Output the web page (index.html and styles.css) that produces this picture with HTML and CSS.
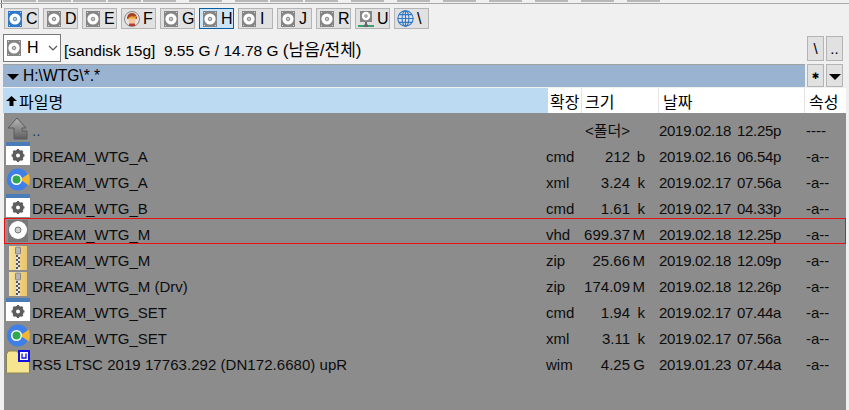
FILE: index.html
```html
<!DOCTYPE html>
<html>
<head>
    <meta charset="UTF-8">
    <title>파일 목록</title>
    <link rel="stylesheet" href="styles.css">
</head>
<body>
    <svg class="defs" width="0" height="0">
        <symbol id="drive" viewBox="0 0 14 16">
            <rect x="0" y="0" width="14" height="16" fill="#858585"/>
            <circle cx="7" cy="8" r="5.6" fill="#fff"/>
            <circle cx="7" cy="8" r="1.8" fill="#c4c4c4" stroke="#777" stroke-width=".8"/>
            <path d="M1 1h1v1H1zM12 1h1v1h-1zM1 14h1v1H1zM12 14h1v1h-1z" fill="#ddd"/>
        </symbol>
        <symbol id="drive-blue" viewBox="0 0 14 16">
            <rect x="0" y="0" width="14" height="16" fill="#2f78c8"/>
            <circle cx="7" cy="8" r="5.6" fill="#fff"/>
            <circle cx="7" cy="8" r="1.8" fill="#bcd" stroke="#47a" stroke-width=".8"/>
            <path d="M1 1h1v1H1zM12 1h1v1h-1zM1 14h1v1H1zM12 14h1v1h-1z" fill="#cde"/>
        </symbol>
        <symbol id="gear-doc" viewBox="0 0 24 24">
            <rect x="0" y="0" width="24" height="23" fill="#fff"/>
            <rect x="0" y="0" width="24" height="4" fill="#4a7cb8"/>
            <circle cx="12" cy="13.500" r="4.200" fill="none" stroke="#5c5c5c" stroke-width="3"/>
            <path d="M12 7v13M5.500 13.500h13M7.400 8.900l9.200 9.200M16.600 8.900l-9.200 9.200" stroke="#5c5c5c" stroke-width="2.200"/>
            <circle cx="12" cy="13.500" r="2" fill="#fff"/>
        </symbol>
        <symbol id="xml" viewBox="0 0 24 24">
            <circle cx="12" cy="11.500" r="11" fill="#3f7fe8"/>
            <path d="M14 11.500L23 5.500q1.500 6 0 12z" fill="#f2b632"/>
            <circle cx="10.500" cy="11.500" r="5.500" fill="#fff"/>
            <circle cx="10.500" cy="11.500" r="4" fill="#2fa84f"/>
        </symbol>
        <symbol id="zip" viewBox="0 0 24 24">
            <defs>
                <linearGradient id="zipfill" x1="0" x2="1" y1="0" y2="0">
                    <stop offset="0" stop-color="#f6e09a"/>
                    <stop offset="1" stop-color="#e9c46c"/>
                </linearGradient>
            </defs>
            <path d="M3 0h18v24H3z" fill="url(#zipfill)"/>
            <rect x="10" y="0" width="4" height="24" fill="#e8e8e8"/>
            <path d="M10 9h2v2h-2zM12 11h2v2h-2zM10 13h2v2h-2zM12 15h2v2h-2zM10 17h2v2h-2zM12 19h2v2h-2zM10 21h2v2h-2z" fill="#555"/>
            <rect x="9.500" y="1" width="5" height="7" rx="1" fill="#b4b4b4" stroke="#777" stroke-width=".8"/>
        </symbol>
        <linearGradient id="upfill" x1="0" x2="0" y1="0" y2="1">
            <stop offset="0" stop-color="#b8b8b8"/>
            <stop offset="1" stop-color="#5e5e5e"/>
        </linearGradient>
    </svg>

    <div class="topstrip">
        <div class="tb"></div><div class="tb"></div><div class="tb"></div><div class="tb"></div><div class="tb"></div>
        <div class="tb sep"></div><div class="tb sep"></div><div class="tb"></div><div class="tb"></div>
        <div class="tb sep"></div><div class="tb sep"></div><div class="tb sep"></div><div class="tb sep"></div>
        <div class="tb sep"></div><div class="tb sep"></div><div class="tb sep"></div>
    </div>

    <div class="drives">
        <div class="drive"><svg class="drive-icon"><use href="#drive-blue"/></svg>C</div>
        <div class="drive"><svg class="drive-icon"><use href="#drive"/></svg>D</div>
        <div class="drive"><svg class="drive-icon"><use href="#drive"/></svg>E</div>
        <div class="drive">
            <svg class="drive-icon wide" viewBox="0 0 16 16">
                <circle cx="8" cy="8" r="7.500" fill="#e4e4e4" stroke="#888"/>
                <path d="M3 8c0-4 2-6 5-6s5 2 5 6z" fill="#a8431f"/>
                <circle cx="8" cy="9" r="3.600" fill="#f4c69a"/>
                <path d="M3.500 7l9-2-1 2.500h-7z" fill="#e8a020"/>
                <path d="M5 12.500h6V15H5z" fill="#c03a2a"/>
            </svg>F
        </div>
        <div class="drive"><svg class="drive-icon"><use href="#drive"/></svg>G</div>
        <div class="drive current"><svg class="drive-icon"><use href="#drive"/></svg>H</div>
        <div class="drive"><svg class="drive-icon"><use href="#drive"/></svg>I</div>
        <div class="drive"><svg class="drive-icon"><use href="#drive"/></svg>J</div>
        <div class="drive"><svg class="drive-icon"><use href="#drive"/></svg>R</div>
        <div class="drive">
            <svg class="drive-icon wide" viewBox="0 0 16 16">
                <rect x="2" y="0" width="12" height="11" fill="#858585"/>
                <circle cx="8" cy="5" r="4.200" fill="#fff"/>
                <circle cx="8" cy="5" r="1.400" fill="#c4c4c4" stroke="#777" stroke-width=".6"/>
                <path d="M8 11v3" stroke="#666" stroke-width="2"/>
                <path d="M0 15h6M10 15h6" stroke="#3aa36a" stroke-width="2"/>
                <rect x="6" y="13.500" width="4" height="2.500" fill="#666"/>
            </svg>U
        </div>
        <div class="drive">
            <svg class="drive-icon globe" viewBox="0 0 20 20" fill="none" stroke="#2f78c8" stroke-width="1.300">
                <circle cx="10" cy="10" r="9"/>
                <ellipse cx="10" cy="10" rx="4" ry="9"/>
                <path d="M10 1v18M1 10h18M2.500 5.500h15M2.500 14.500h15"/>
            </svg>\
        </div>
    </div>

    <div class="inforow">
        <div class="combo">
            <svg class="drive-icon"><use href="#drive"/></svg>
            <span class="combo-letter">H</span>
            <svg class="combo-arrow" viewBox="0 0 10 6"><path d="M1 1l4 4 4-4" fill="none" stroke="#555" stroke-width="1.200"/></svg>
        </div>
        <div class="info">[sandisk 15g]&nbsp; 9.55 G / 14.78 G <span class="kr">(남음/전체)</span></div>
        <div class="smallbtn tall">\</div>
        <div class="smallbtn tall">..</div>
    </div>

    <div class="pathrow">
        <div class="path"><span class="tri"></span>H:\WTG\*.*</div>
        <div class="smallbtn star">✱</div>
        <div class="smallbtn"><span class="tri"></span></div>
    </div>

    <div class="heads">
        <div class="head head-name"><span class="up"></span>파일명</div>
        <div class="head head-ext">확장</div>
        <div class="head head-size">크기</div>
        <div class="head head-date">날짜</div>
        <div class="head head-attr">속성</div>
    </div>

    <div class="list">
        <div class="row">
            <svg class="icon" viewBox="0 0 24 24"><path d="M11 2L20 12h-4v3h5v8H8V12H2z" fill="url(#upfill)" stroke="#5a5a5a"/></svg>
            <div class="dots">..</div><div></div>
            <div class="num">&lt;폴더&gt;</div><div></div>
            <div class="stamp">2019.02.18</div><div class="stamp">12.25p</div><div>----</div>
        </div>
        <div class="row">
            <svg class="icon"><use href="#gear-doc"/></svg>
            <div>DREAM_WTG_A</div><div>cmd</div>
            <div class="num">212</div><div class="unit">b</div>
            <div class="stamp">2019.02.16</div><div class="stamp">06.54p</div><div>-a--</div>
        </div>
        <div class="row">
            <svg class="icon"><use href="#xml"/></svg>
            <div>DREAM_WTG_A</div><div>xml</div>
            <div class="num">3.24</div><div class="unit">k</div>
            <div class="stamp">2019.02.17</div><div class="stamp">07.56a</div><div>-a--</div>
        </div>
        <div class="row">
            <svg class="icon"><use href="#gear-doc"/></svg>
            <div>DREAM_WTG_B</div><div>cmd</div>
            <div class="num">1.61</div><div class="unit">k</div>
            <div class="stamp">2019.02.17</div><div class="stamp">04.33p</div><div>-a--</div>
        </div>
        <div class="row selected">
            <svg class="icon" viewBox="0 0 24 24">
                <rect x="2" y="0" width="20" height="22" fill="#777"/>
                <circle cx="12" cy="10" r="9" fill="#fff"/>
                <circle cx="12" cy="10" r="3" fill="#ccc" stroke="#777"/>
            </svg>
            <div>DREAM_WTG_M</div><div>vhd</div>
            <div class="num">699.37</div><div class="unit">M</div>
            <div class="stamp">2019.02.18</div><div class="stamp">12.25p</div><div>-a--</div>
        </div>
        <div class="row">
            <svg class="icon"><use href="#zip"/></svg>
            <div>DREAM_WTG_M</div><div>zip</div>
            <div class="num">25.66</div><div class="unit">M</div>
            <div class="stamp">2019.02.18</div><div class="stamp">12.09p</div><div>-a--</div>
        </div>
        <div class="row">
            <svg class="icon"><use href="#zip"/></svg>
            <div>DREAM_WTG_M (Drv)</div><div>zip</div>
            <div class="num">174.09</div><div class="unit">M</div>
            <div class="stamp">2019.02.18</div><div class="stamp">12.26p</div><div>-a--</div>
        </div>
        <div class="row">
            <svg class="icon"><use href="#gear-doc"/></svg>
            <div>DREAM_WTG_SET</div><div>cmd</div>
            <div class="num">1.94</div><div class="unit">k</div>
            <div class="stamp">2019.02.17</div><div class="stamp">07.44a</div><div>-a--</div>
        </div>
        <div class="row">
            <svg class="icon"><use href="#xml"/></svg>
            <div>DREAM_WTG_SET</div><div>xml</div>
            <div class="num">3.11</div><div class="unit">k</div>
            <div class="stamp">2019.02.17</div><div class="stamp">07.56a</div><div>-a--</div>
        </div>
        <div class="row">
            <svg class="icon" viewBox="0 0 24 24">
                <path d="M.5 4l2-3h8l3 3h10v19H.5z" fill="#f6e58f" stroke="#8c8450"/>
                <rect x="13" y="1" width="10" height="10" fill="#fff" stroke="#1010e0" stroke-width="2"/>
                <path d="M16 3.500v4.500h4V3.500" fill="none" stroke="#1010e0" stroke-width="1.300"/>
            </svg>
            <div class="long">RS5 LTSC 2019 17763.292 (DN172.6680) upR</div><div>wim</div>
            <div class="num">4.25</div><div class="unit">G</div>
            <div class="stamp">2019.01.23</div><div class="stamp">07.44a</div><div>-a--</div>
        </div>
    </div>
</body>
</html>
```

FILE: styles.css
```css
html, body {
    height: 100%;
    overflow: hidden;
}
body {
    margin: 0;
    background: linear-gradient(#2a7fd0, #2a7fd0) 1px 0 / 1px 8px no-repeat #f0f0f0;
    color: #000;
    font-family: "Liberation Sans", "Noto Sans CJK KR", sans-serif;
    font-size: 15px;
    display: flex;
    flex-direction: column;
}
.defs {
    position: absolute;
}
.topstrip {
    height: 3px;
    flex: none;
    display: flex;
    gap: 2px;
    padding-left: 3px;
    border-bottom: 1px solid #a8a8a8;
}
.tb {
    width: 33px;
    height: 2px;
    background-color: #b8b8b8;
}
.tb.sep {
    margin-left: 11px;
}
.drives {
    display: flex;
    gap: 4px;
    padding: 4px 0 0 4px;
    height: 21px;
    flex: none;
}
.drive {
    width: 35px;
    height: 21px;
    box-sizing: border-box;
    border: 1px solid #b4b4b4;
    background-color: #e1e1e1;
    display: flex;
    align-items: center;
    gap: 4px;
    padding-left: 3px;
    font-size: 16px;
}
.drive.current {
    border-color: #0a5d9e;
    background-color: #cce4f7;
}
.drive-icon {
    width: 14px;
    height: 16px;
    flex: none;
}
.drive-icon.wide {
    width: 16px;
    height: 16px;
    margin-left: -1px;
    margin-right: -1px;
}
.drive-icon.globe {
    width: 17px;
    height: 17px;
    margin-left: -1px;
    margin-right: -1px;
}
.inforow {
    display: flex;
    align-items: center;
    height: 28px;
    margin-top: 5px;
    padding: 0 6px 0 3px;
    gap: 2px;
    flex: none;
}
.combo {
    width: 58px;
    height: 28px;
    box-sizing: border-box;
    border: 1px solid #7a7a7a;
    background-color: #fff;
    display: flex;
    align-items: center;
    padding-left: 3px;
    font-size: 16px;
}
.combo-letter {
    margin-left: 6px;
}
.combo-arrow {
    width: 10px;
    height: 6px;
    margin-left: 9px;
}
.info {
    flex: 1;
    margin-left: 1px;
    font-size: 15.500px;
}
.kr {
    font-size: 17px;
}
.smallbtn {
    width: 17px;
    height: 23px;
    box-sizing: border-box;
    border: 1px solid #b4b4b4;
    background-color: #e1e1e1;
    display: flex;
    align-items: center;
    justify-content: center;
    flex: none;
}
.smallbtn.tall {
    height: 25px;
}
.smallbtn.star {
    font-family: "DejaVu Sans", sans-serif;
    font-size: 9px;
}
.pathrow {
    display: flex;
    gap: 2px;
    padding: 0 6px 0 3px;
    margin-top: 2px;
    height: 23px;
    flex: none;
}
.path {
    flex: 1;
    background-color: #9ab3d0;
    border-top: 1px solid #a0a0a0;
    display: flex;
    align-items: center;
    padding-left: 4px;
    gap: 4px;
    font-size: 15.600px;
}
.tri {
    width: 0;
    height: 0;
    border-left: 6px solid transparent;
    border-right: 6px solid transparent;
    border-top: 6px solid #000;
    margin-top: 2px;
}
.heads {
    display: flex;
    height: 25px;
    margin: 1px 3px 0 3px;
    background-color: #fff;
    flex: none;
    font-size: 16px;
}
.head {
    box-sizing: border-box;
    padding-top: 6px;
    border-right: 1px solid #e4e4e4;
    line-height: 18px;
    white-space: nowrap;
}
.head-name {
    width: 545px;
    background-color: #bcdaf2;
    border-right: 0;
    padding-left: 3px;
    display: flex;
}
.up {
    width: 11px;
    height: 10px;
    margin: 2px 2px 0 0;
    background-color: #000;
    clip-path: polygon(50% 0, 100% 50%, 68% 50%, 68% 100%, 32% 100%, 32% 50%, 0 50%);
}
.head-ext {
    width: 34px;
    padding-left: 2px;
}
.head-size {
    width: 77px;
    padding-left: 3px;
}
.head-date {
    width: 146px;
    padding-left: 4px;
}
.head-attr {
    flex: 1;
    border-right: 0;
    padding-left: 4px;
}
.list {
    flex: 1;
    margin-left: 4px;
    margin-right: 3px;
    background-color: #8c8c8c;
    color: #0c0c0c;
    padding-top: 1px;
}
.row {
    display: grid;
    grid-template-columns: 28px 514px 28px 56px 29px 78px 69px 1fr;
    height: 26px;
    box-sizing: border-box;
    padding-top: 8px;
    line-height: 18px;
    white-space: nowrap;
}
.row.selected {
    outline: 1px solid #e81010;
    outline-offset: -1px;
}
.icon {
    width: 24px;
    height: 24px;
    margin: -6px 0 0 2px;
}
.num {
    text-align: right;
}
.unit {
    padding-right: 14px;
    text-align: right;
}
.stamp {
    letter-spacing: -0.300px;
}
.long {
    letter-spacing: 0.050px;
}
.dots {
    color: #1a3a70;
}
```
